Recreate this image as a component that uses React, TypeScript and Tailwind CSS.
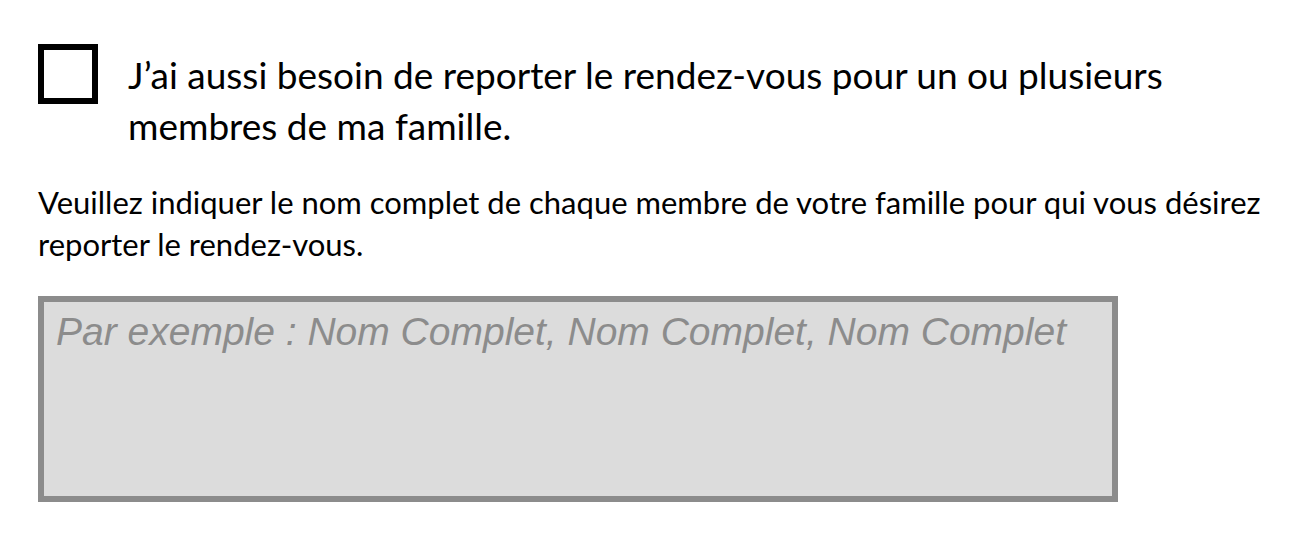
export default function App() {
  return (
    <div className="w-[1300px] h-[542px] bg-white pl-[38px] pt-[44px] font-['Lato',sans-serif] text-black">
      <div className="flex items-start">
        <div className="w-[60px] h-[60px] border-[6px] border-black shrink-0 bg-white" />
        <p className="ml-[30px] mt-[5px] w-[1100px] text-[37px] leading-[51px]">
          J’ai aussi besoin de reporter le rendez-vous pour un ou plusieurs membres de ma famille.
        </p>
      </div>
      <p className="mt-[30px] w-[1245px] text-[31px] leading-[42px]">
        Veuillez indiquer le nom complet de chaque membre de votre famille pour qui vous désirez reporter le rendez-vous.
      </p>
      <textarea
        className="mt-[31px] block w-[1080px] h-[206px] border-[6px] border-[#8c8c8c] bg-[#dcdcdc] px-[12px] pt-[8px] pb-[8px] resize-none outline-none font-['Liberation_Sans',sans-serif] italic text-[39px] leading-[44px] placeholder:text-[#8c8c8c]"
        placeholder="Par exemple : Nom Complet, Nom Complet, Nom Complet"
      />
    </div>
  );
}
